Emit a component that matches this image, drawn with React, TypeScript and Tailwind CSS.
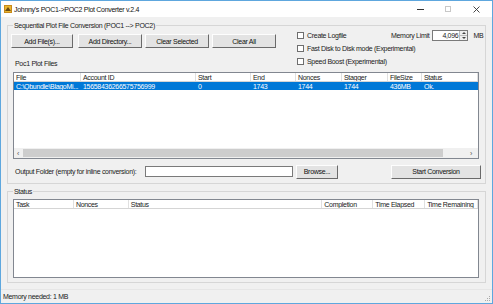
import React from "react";

const font = { fontFamily: '"Liberation Sans", Arial, sans-serif' };

function Btn({ w, children }: { w: string; children: React.ReactNode }) {
  return (
    <div
      className={`${w} h-[14px] flex items-center justify-center whitespace-nowrap bg-[#e3e3e3] border border-t-[#fdfdfd] border-l-[#fdfdfd] border-r-[#6a6a6a] border-b-[#6a6a6a] text-[#111]`}
    >
      {children}
    </div>
  );
}

function Check({ label }: { label: string }) {
  return (
    <div className="h-[13px] flex items-center whitespace-nowrap">
      <div className="w-[7px] h-[7px] shrink-0 bg-white border border-[#6e6e6e]" />
      <span className="ml-[3px]">{label}</span>
    </div>
  );
}

function Header({ cols }: { cols: [string, string][] }) {
  return (
    <div className="flex h-[9px] border-b border-[#d5d5d5] bg-white shrink-0">
      {cols.map(([name, w], i) => (
        <div
          key={i}
          className={`${w} h-full flex items-center pl-[2px] border-r border-[#e0e0e0] overflow-hidden whitespace-nowrap`}
        >
          {name}
        </div>
      ))}
    </div>
  );
}

export default function App() {
  return (
    <div
      style={font}
      className="w-[493px] h-[304px] bg-[#f0f0f0] border border-[#5ea7de] flex flex-col text-[7px] leading-[9px] tracking-[-0.3px] text-[#1a1a1a] overflow-hidden"
    >
      {/* Title bar */}
      <div className="h-[16px] bg-white flex items-center shrink-0">
        <svg width="8" height="8" viewBox="0 0 8 8" className="ml-[3px]">
          <rect x="0" y="0" width="8" height="8" fill="#c88a1a" />
          <rect x="1" y="1" width="6" height="6" fill="#e8b631" />
          <path d="M1 6 L4 2 L7 6 Z" fill="#6b4a12" />
        </svg>
        <span className="ml-[2px] text-[#111]">Johnny's POC1-&gt;POC2 Plot Converter v.2.4</span>
        <div className="ml-auto flex items-center h-full">
          <div className="w-[28px] flex justify-center">
            <div className="w-[7px] h-px bg-[#333]" />
          </div>
          <div className="w-[28px] flex justify-center">
            <div className="w-[6px] h-[6px] border border-[#c8c8c8]" />
          </div>
          <div className="w-[28px] flex justify-center mr-[2px]">
            <svg width="7" height="7" viewBox="0 0 7 7">
              <path d="M0.5 0.5 L6.5 6.5 M6.5 0.5 L0.5 6.5" stroke="#333" strokeWidth="0.9" />
            </svg>
          </div>
        </div>
      </div>

      {/* Group 1 */}
      <div className="relative mt-[8px] mx-[6px] h-[159px] border border-[#d6d6d6] shrink-0 flex flex-col">
        <span className="absolute -top-[5px] left-[5px] px-[1px] bg-[#f0f0f0] whitespace-nowrap">
          Sequential Plot File Conversion (POC1 --&gt; POC2)
        </span>
        <div className="flex h-[46px] shrink-0">
          <div className="w-[280px] flex flex-col">
            <div className="mt-[8px] ml-[3px] flex">
              <Btn w="w-[62px]">Add File(s)...</Btn>
              <div className="ml-[5px]">
                <Btn w="w-[64px]">Add Directory...</Btn>
              </div>
              <div className="ml-[3px]">
                <Btn w="w-[64px]">Clear Selected</Btn>
              </div>
              <div className="ml-[3px]">
                <Btn w="w-[64px]">Clear All</Btn>
              </div>
            </div>
            <div className="mt-[11px] ml-[7px]">Poc1 Plot Files</div>
          </div>
          <div className="ml-[9px] w-[94px] mt-[3px] flex flex-col">
            <Check label="Create Logfile" />
            <Check label="Fast Disk to Disk mode (Experimental)" />
            <Check label="Speed Boost (Experimental)" />
          </div>
          <div className="flex items-start mt-[4px] whitespace-nowrap">
            <span className="mt-[1px]">Memory Limit</span>
            <div className="ml-[3px] w-[36px] h-[11px] bg-white border border-[#7a7a7a] flex items-center">
              <span className="flex-1 text-right pr-[1px]">4,096</span>
              <div className="w-[8px] h-full border-l border-[#bbb] flex flex-col">
                <div className="flex-1 flex items-center justify-center bg-[#eee] border-b border-[#bbb]">
                  <svg width="4" height="2" viewBox="0 0 4 2"><path d="M0 2 L2 0 L4 2 Z" fill="#444" /></svg>
                </div>
                <div className="flex-1 flex items-center justify-center bg-[#eee]">
                  <svg width="4" height="2" viewBox="0 0 4 2"><path d="M0 0 L2 2 L4 0 Z" fill="#444" /></svg>
                </div>
              </div>
            </div>
            <span className="ml-[5px] mt-[1px]">MB</span>
          </div>
        </div>

        {/* Plot file list */}
        <div className="ml-[5px] w-[466px] h-[87px] bg-white border border-[#828790] flex flex-col shrink-0">
          <Header
            cols={[
              ["File", "w-[67px]"],
              ["Account ID", "w-[115px]"],
              ["Start", "w-[55px]"],
              ["End", "w-[45px]"],
              ["Nonces", "w-[46px]"],
              ["Stagger", "w-[46px]"],
              ["FileSize", "w-[34px]"],
              ["Status", "w-[56px]"],
            ]}
          />
          <div className="flex h-[8px] bg-[#0078d7] text-white">
            {[
              ["C:\\Qbundle\\BlagoMi...", "w-[67px]"],
              ["15658436266575756999", "w-[115px]"],
              ["0", "w-[55px]"],
              ["1743", "w-[45px]"],
              ["1744", "w-[46px]"],
              ["1744", "w-[46px]"],
              ["436MB", "w-[34px]"],
              ["Ok.", "w-[56px]"],
            ].map(([t, w], i) => (
              <div key={i} className={`${w} pl-[2px] flex items-center overflow-hidden whitespace-nowrap`}>
                {t}
              </div>
            ))}
          </div>
          <div className="flex-1" />
          <div className="h-[10px] flex items-center bg-[#f0f0f0] shrink-0">
            <div className="w-[8px] flex justify-center text-[#555]">‹</div>
            <div className="ml-[1px] w-[420px] h-[8px] bg-[#cdcdcd]" />
            <div className="flex-1 flex justify-end pr-[6px] text-[#555]">›</div>
          </div>
        </div>

        {/* Output row */}
        <div className="flex items-center mt-[5px] h-[15px] shrink-0">
          <span className="ml-[7px] w-[130px] whitespace-nowrap">Output Folder (empty for inline conversion):</span>
          <div className="w-[148px] h-[11px] bg-white border border-[#7a7a7a]" />
          <div className="ml-[3px]">
            <Btn w="w-[42px]">Browse...</Btn>
          </div>
          <div className="ml-[53px]">
            <Btn w="w-[90px]">Start Conversion</Btn>
          </div>
        </div>
      </div>

      {/* Status group */}
      <div className="relative mt-[7px] mx-[6px] h-[92px] border border-[#d6d6d6] shrink-0 flex flex-col">
        <span className="absolute -top-[5px] left-[5px] px-[1px] bg-[#f0f0f0]">Status</span>
        <div className="mt-[7px] ml-[5px] w-[466px] h-[79px] bg-white border border-[#828790] flex flex-col">
          <Header
            cols={[
              ["Task", "w-[60px]"],
              ["Nonces", "w-[55px]"],
              ["Status", "w-[194px]"],
              ["Completion", "w-[51px]"],
              ["Time Elapsed", "w-[52px]"],
              ["Time Remaining", "w-[53px]"],
            ]}
          />
        </div>
      </div>

      {/* Status bar */}
      <div className="mt-auto h-[14px] flex items-center relative shrink-0 border-t border-[#e6e6e6]">
        <span className="ml-[2px]">Memory needed: 1 MB</span>
        <svg width="6" height="6" viewBox="0 0 6 6" className="absolute right-[1px] bottom-[1px]">
          <rect x="4" y="0" width="1" height="1" fill="#aaa" />
          <rect x="2" y="2" width="1" height="1" fill="#aaa" />
          <rect x="4" y="2" width="1" height="1" fill="#aaa" />
          <rect x="0" y="4" width="1" height="1" fill="#aaa" />
          <rect x="2" y="4" width="1" height="1" fill="#aaa" />
          <rect x="4" y="4" width="1" height="1" fill="#aaa" />
        </svg>
      </div>
    </div>
  );
}
